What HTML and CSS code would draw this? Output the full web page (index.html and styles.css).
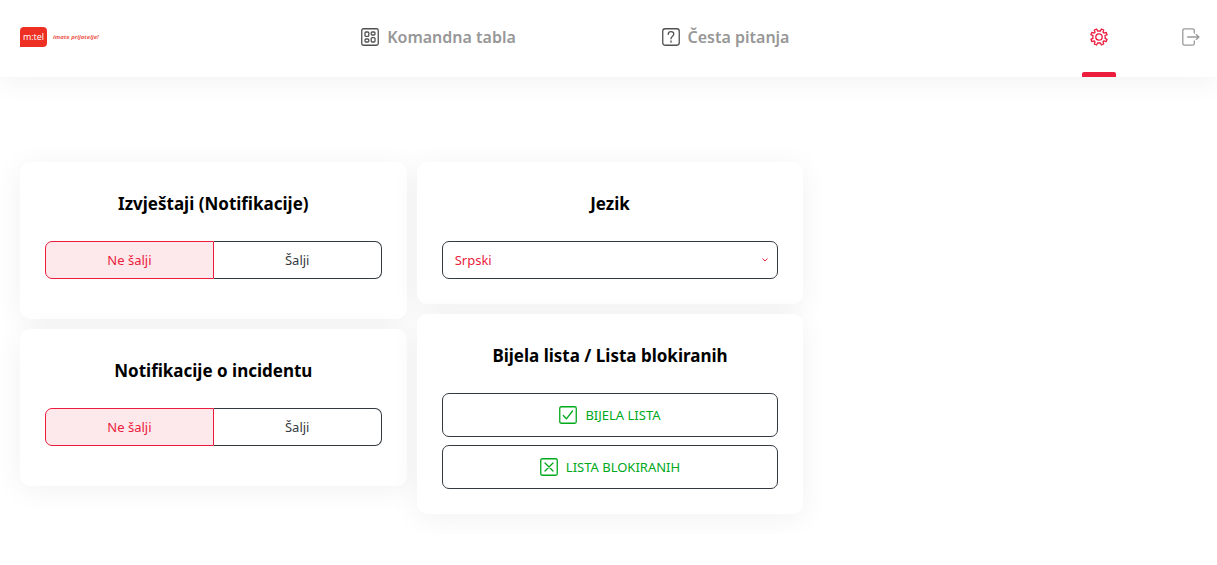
FILE: index.html
```html
<!DOCTYPE html>
<html lang="sr-Latn">
<head>
<meta charset="utf-8">
<meta name="viewport" content="width=device-width, initial-scale=1">
<title>m:tel</title>
<link rel="stylesheet" href="styles.css">
</head>
<body>
<header class="topbar">
  <a class="brand" href="#"><span class="brand-mark">m:tel</span><span class="brand-slogan">imate prijatelje!</span></a>
  <a class="nav-link" href="#">
    <svg class="icon icon-dark" viewBox="0 0 18 18" aria-hidden="true"><rect x=".75" y=".75" width="16.5" height="16.5" rx="1.8"/><rect x="4" y="4" width="3.800" height="4.400" rx="1"/><rect x="10.200" y="4" width="3.800" height="3" rx="1"/><rect x="4" y="11" width="3.800" height="3" rx="1"/><rect x="10.200" y="9.600" width="3.800" height="4.400" rx="1"/></svg>
    <span>Komandna tabla</span>
  </a>
  <a class="nav-link" href="#">
    <svg class="icon icon-dark" viewBox="0 0 18 18" aria-hidden="true"><rect x=".75" y=".75" width="16.5" height="16.5" rx="2.4"/><path d="M6.200 6.400C6.200 4.600 7.400 3.600 9 3.600s2.800 1 2.800 2.500C11.800 8.200 9 8.200 9 10.800M9 13v1.200"/></svg>
    <span>Česta pitanja</span>
  </a>
  <nav class="tools">
    <a class="tool tool-active" href="#" aria-label="Podešavanja">
      <svg class="icon" viewBox="0 0 18 18" aria-hidden="true"><circle cx="9" cy="9" r="3.200"/><path d="M7.700 3.200Q9 2.800 10.300 3.200L11.400 1 13.700 2 13 4.300Q13.700 4.500 13.900 5.100L16.100 4.300 17.100 6.700 15 7.700Q15.400 9 15 10.300L17.100 11.300 16.100 13.700 13.900 12.900Q13.600 13.500 13 13.800L13.700 16 11.400 17 10.300 14.800Q9 15.200 7.700 14.800L6.600 17 4.300 16 5 13.800Q4.400 13.500 4.100 12.900L1.900 13.700.9 11.300 3 10.300Q2.600 9 3 7.700L.9 6.700 1.900 4.300 4.100 5.100Q4.300 4.500 5 4.300L4.300 2 6.600 1Z"/></svg>
    </a>
    <a class="tool" href="#" aria-label="Odjava">
      <svg class="icon icon-grey" viewBox="0 0 18 18" aria-hidden="true"><path d="M12.300 5V2.500Q12.300.8 10.600.8H2.500Q.8.8.8 2.500v13Q.8 17.200 2.500 17.200h8.100q1.700 0 1.700-1.700V13M5.700 9h11.300M14.200 6.600 17 9l-2.800 2.400"/></svg>
    </a>
  </nav>
</header>
<main class="board">
  <div class="column">
    <section class="card card-tall">
      <h2 class="card-title">Izvještaji (Notifikacije)</h2>
      <div class="toggle">
        <button class="toggle-option toggle-on" type="button" aria-pressed="true">Ne šalji</button>
        <button class="toggle-option" type="button" aria-pressed="false">Šalji</button>
      </div>
    </section>
    <section class="card card-tall">
      <h2 class="card-title">Notifikacije o incidentu</h2>
      <div class="toggle">
        <button class="toggle-option toggle-on" type="button" aria-pressed="true">Ne šalji</button>
        <button class="toggle-option" type="button" aria-pressed="false">Šalji</button>
      </div>
    </section>
  </div>
  <div class="column">
    <section class="card">
      <h2 class="card-title"><label for="language">Jezik</label></h2>
      <div class="picker">
        <select class="picker-select" id="language"><option>Srpski</option></select>
        <svg class="picker-arrow" viewBox="0 0 6 4" aria-hidden="true"><path d="M.5.600 3 3 5.500.600"/></svg>
      </div>
    </section>
    <section class="card">
      <h2 class="card-title">Bijela lista / Lista blokiranih</h2>
      <div class="lists">
        <button class="list-button" type="button">
          <svg class="icon" viewBox="0 0 18 18" aria-hidden="true"><rect x=".75" y=".75" width="16.5" height="16.500" rx="1.500"/><path d="M4.300 9.500 7.400 12.800 13.500 5"/></svg>
          <span>BIJELA LISTA</span>
        </button>
        <button class="list-button" type="button">
          <svg class="icon" viewBox="0 0 18 18" aria-hidden="true"><rect x=".75" y=".75" width="16.5" height="16.500" rx="1.500"/><path d="M5 5l8 8M13 5l-8 8"/></svg>
          <span>LISTA BLOKIRANIH</span>
        </button>
      </div>
    </section>
  </div>
</main>
</body>
</html>
```
FILE: styles.css
```css
* { box-sizing: border-box; }
body {
  margin: 0;
  background: #fff;
  color: #000;
  font: 13px/20px "Noto Sans", "Open Sans", sans-serif;
}
button, select { font: inherit; }
a { color: inherit; text-decoration: none; }

.icon {
  width: 18px;
  height: 18px;
  flex: none;
  fill: none;
  stroke: currentColor;
  stroke-width: 1.3;
  stroke-linecap: round;
  stroke-linejoin: round;
}
.icon-dark { color: #505050; }
.icon-grey { color: #9a9a9a; }

.topbar {
  display: grid;
  grid-template-columns: 295fr 287fr 287fr 348fr;
  height: 77px;
  background: #fff;
  box-shadow: 0 4px 30px rgba(0, 0, 0, .06);
}
.brand {
  display: flex;
  align-items: center;
  gap: 6px;
  padding: 0 0 3px 20px;
}
.brand-mark {
  width: 27px;
  height: 20px;
  border-radius: 4px 4px 4px 0;
  background: #ee3024;
  color: #fff;
  font: 9px/20px "Open Sans", sans-serif;
  text-align: center;
}
.brand-slogan {
  color: #ee5a50;
  font: italic bold 6px/8px "Open Sans", sans-serif;
}
.nav-link {
  display: flex;
  align-items: center;
  justify-content: center;
  gap: 8px;
  padding-bottom: 3px;
  color: #979797;
  font-size: 16px;
  font-weight: 600;
  white-space: nowrap;
}
.tools {
  display: flex;
  justify-content: flex-end;
  gap: 58px;
  padding-right: 9px;
}
.tool {
  display: grid;
  grid-template-rows: 1fr 5px;
  align-items: center;
  justify-items: center;
  width: 34px;
  padding-top: 2px;
}
.tool-active { color: #eb1c3c; }
.tool-active::after {
  content: "";
  width: 100%;
  height: 5px;
  border-radius: 2px 2px 0 0;
  background: #eb1c3c;
}

.board {
  display: grid;
  grid-template-columns: repeat(3, 1fr);
  gap: 10px;
  padding: 85px 17px 20px 20px;
}
.column {
  display: flex;
  flex-direction: column;
  gap: 10px;
}
.card {
  padding: 25px;
  border-radius: 10px;
  background: #fff;
  box-shadow: 0 4px 30px rgba(0, 0, 0, .06);
}
.card-tall { padding-bottom: 40px; }
.card-title {
  margin: 0 0 20px;
  font-size: 17px;
  line-height: 34px;
  font-weight: 700;
  text-align: center;
}

.toggle { display: flex; }
.toggle-option {
  flex: 1;
  height: 38px;
  padding: 0;
  border: 1px solid #343a40;
  border-left: 0;
  border-radius: 0 7px 7px 0;
  background: #fff;
  color: #343a40;
}
.toggle-on {
  border: 1px solid #eb1c3c;
  border-radius: 7px 0 0 7px;
  background: #fde8eb;
  color: #eb1c3c;
}

.picker { display: grid; align-items: center; }
.picker-select, .picker-arrow { grid-area: 1 / 1; }
.picker-select {
  width: 100%;
  height: 38px;
  padding: 0 12px;
  appearance: none;
  border: 1px solid #343a40;
  border-radius: 7px;
  background: #fff;
  color: #eb1c3c;
}
.picker-arrow {
  width: 6px;
  height: 4px;
  margin-right: 10px;
  justify-self: end;
  fill: none;
  stroke: #eb1c3c;
  pointer-events: none;
}

.lists {
  display: flex;
  flex-direction: column;
  gap: 8px;
}
.list-button {
  display: flex;
  align-items: center;
  justify-content: center;
  gap: 8px;
  height: 44px;
  border: 1px solid #343a40;
  border-radius: 7px;
  background: #fff;
  color: #00a91b;
}
```
